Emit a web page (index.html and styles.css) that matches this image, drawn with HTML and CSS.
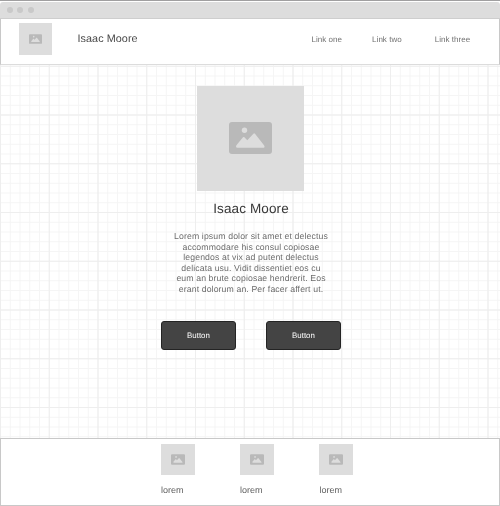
FILE: index.html
```
<!DOCTYPE html>
<html lang="en">
<head>
<meta charset="utf-8">
<title>Isaac Moore</title>
<link rel="stylesheet" href="styles.css">
</head>
<body>
<svg width="0" height="0" class="defs">
  <symbol id="image" viewBox="0 0 43 32">
    <path fill="#b9b9b9" fill-rule="evenodd" d="M3 0H40Q43 0 43 3V29Q43 32 40 32H3Q0 32 0 29V3Q0 0 3 0Z"/>
    <circle cx="15.5" cy="8.2" r="2.7" fill="#ddd"/>
    <path fill="#ddd" d="M7.4 23.2L14 15.3Q14.7 14.6 15.4 15.3L18.3 18.3L24.4 11.7Q25.2 11 26 11.8L35.2 23.5Q36.2 25.7 34.5 25.7H8.5Q6.3 25.7 7.4 23.2Z"/>
  </symbol>
</svg>
<div class="window">
  <div class="titlebar"><i></i><i></i><i></i></div>
  <header class="header">
    <div class="thumb logo"><svg><use href="#image"/></svg></div>
    <div class="brand">Isaac Moore</div>
    <nav class="nav"><a>Link one</a><a>Link two</a><a>Link three</a></nav>
  </header>
  <main class="main">
    <svg class="grid" width="500" height="373">
      <path class="minor" stroke-width="373" d="M0 186.5H500"/>
      <path class="major" stroke-width="373" d="M0 186.5H500"/>
      <path class="minor rows" stroke-width="500" d="M250 .8V373"/>
      <path class="major rows" stroke-width="500" d="M250 .8V373"/>
    </svg>
    <div class="thumb hero"><svg><use href="#image"/></svg></div>
    <h1>Isaac Moore</h1>
    <p>Lorem ipsum dolor sit amet et delectus<br>accommodare his consul copiosae<br>legendos at vix ad putent delectus<br>delicata usu. Vidit dissentiet eos cu<br>eum an brute copiosae hendrerit. Eos<br>erant dolorum an. Per facer affert ut.</p>
    <div class="actions"><button>Button</button><button>Button</button></div>
  </main>
  <footer class="footer">
    <div class="item"><div class="thumb small"><svg><use href="#image"/></svg></div><span>lorem</span></div>
    <div class="item"><div class="thumb small"><svg><use href="#image"/></svg></div><span>lorem</span></div>
    <div class="item"><div class="thumb small"><svg><use href="#image"/></svg></div><span>lorem</span></div>
  </footer>
</div>
</body>
</html>
```
FILE: styles.css
```
* { box-sizing: border-box; }
body {
  margin: 0;
  background: #fff;
  font-family: "Liberation Sans", Arial, sans-serif;
  text-rendering: geometricPrecision;
  color: #484848;
  overflow: hidden;
}
.defs { position: absolute; }
.window {
  width: 500px;
  height: 506px;
  display: flex;
  flex-direction: column;
  border-top: 1px solid #a09fa0;
  will-change: transform;
}
.titlebar {
  height: 17px;
  margin-top: 1px;
  flex: none;
  display: flex;
  align-items: center;
  gap: 4.6px;
  padding-left: 6.5px;
  background: #ddd;
  border-radius: 3px 3px 0 0;
  border-bottom: 1px solid #cecece;
}
.titlebar i {
  width: 6px;
  height: 6px;
  border-radius: 50%;
  background: #c9c9c9;
}
.header {
  height: 46px;
  flex: none;
  display: flex;
  align-items: flex-start;
  background: #fff;
  border: 1px solid #c8c8c8;
  border-top: 0;
  border-bottom-color: #dcdcdc;
}
.thumb {
  display: flex;
  align-items: center;
  justify-content: center;
  background: #ddd;
}
.logo { width: 33px; height: 32px; margin: 4px 0 0 18px; }
.logo svg { width: 13px; height: 10px; }
.brand {
  margin: 13px 0 0 25.5px;
  width: 100px;
  font-size: 10.8px;
  line-height: 14px;
  letter-spacing: .07px;
}
.nav {
  display: flex;
  margin: 15px 0 0 134px;
  gap: 30px;
  font-size: 8px;
  line-height: 12px;
  letter-spacing: .04px;
  color: #707070;
}
.nav a:last-child { margin-left: 3px; }
.main {
  position: relative;
  height: 373px;
  flex: none;
  display: flex;
  flex-direction: column;
  align-items: center;
}
.grid { position: absolute; inset: 0; z-index: -1; }
.minor { stroke: #f5f5f5; stroke-dasharray: 1 8.75; }
.major { stroke: #eeeeee; stroke-dasharray: 1 47.75; }
.rows { mix-blend-mode: darken; }
.hero { width: 107px; height: 105px; margin-top: 21px; }
.hero svg { width: 43px; height: 32px; margin-bottom: 1px; }
h1 {
  margin: 9px 0 0 2px;
  font-size: 13.5px;
  line-height: 17px;
  font-weight: 400;
  letter-spacing: .12px;
  color: #383838;
}
p {
  margin: 14px 0 0 2px;
  font-size: 8.7px;
  line-height: 10.55px;
  letter-spacing: .12px;
  text-align: center;
  color: #6c6c6c;
}
.actions { display: flex; gap: 30px; margin: 26.7px 0 0 2px; }
button {
  width: 75px;
  height: 29px;
  padding: 1px 0 0;
  border: 1px solid #242424;
  border-radius: 3px;
  background: #444;
  color: #fff;
  font: 7.9px "Liberation Sans", Arial, sans-serif;
  text-rendering: inherit;
}
.footer {
  height: 68px;
  flex: none;
  display: flex;
  gap: 45px;
  padding: 5px 0 0 160px;
  background: #fff;
  border: 1px solid #c8c8c8;
}
.item { width: 34px; font-size: 9px; line-height: 12px; color: #606060; }
.item:last-child { margin-left: .4px; }
.small { width: 34px; height: 31px; margin-bottom: 9px; }
.small svg { width: 14px; height: 11px; }
```
